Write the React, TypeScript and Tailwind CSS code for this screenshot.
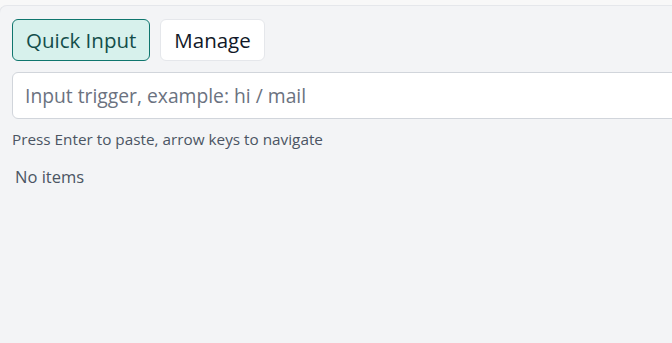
export default function App() {
  return (
    <div
      className="h-[343px] w-[672px] overflow-hidden bg-[#f8f8f8] pt-[5px]"
      style={{ fontFamily: '"Open Sans", "Noto Sans", sans-serif' }}
    >
      <div className="-ml-px h-full rounded-tl-lg border-t border-l border-[#e5e7eb] bg-[#f3f4f6] px-[12px] pt-[13px]">
        <div className="flex gap-[10px]">
          <button className="h-[42px] rounded-md border border-[#0f766e] bg-[#d7f1ec] px-[13px] text-[20.5px] text-[#134e4a]">
            Quick Input
          </button>
          <button className="h-[42px] rounded-md border border-[#e5e7eb] bg-white px-[13px] text-[20.5px] text-[#111827]">
            Manage
          </button>
        </div>
        <input
          placeholder="Input trigger, example: hi / mail"
          className="mt-[11px] h-[47px] w-[700px] rounded-md border border-[#d1d5db] bg-white px-[12px] text-[19.3px] text-[#111827] placeholder:text-[#6b7280] focus:outline-none"
        />
        <p className="mt-[9px] text-[15.3px] text-[#4b5563]">
          Press Enter to paste, arrow keys to navigate
        </p>
        <p className="mt-[14px] pl-[3px] text-[16.5px] text-[#4b5563]">No items</p>
      </div>
    </div>
  );
}
